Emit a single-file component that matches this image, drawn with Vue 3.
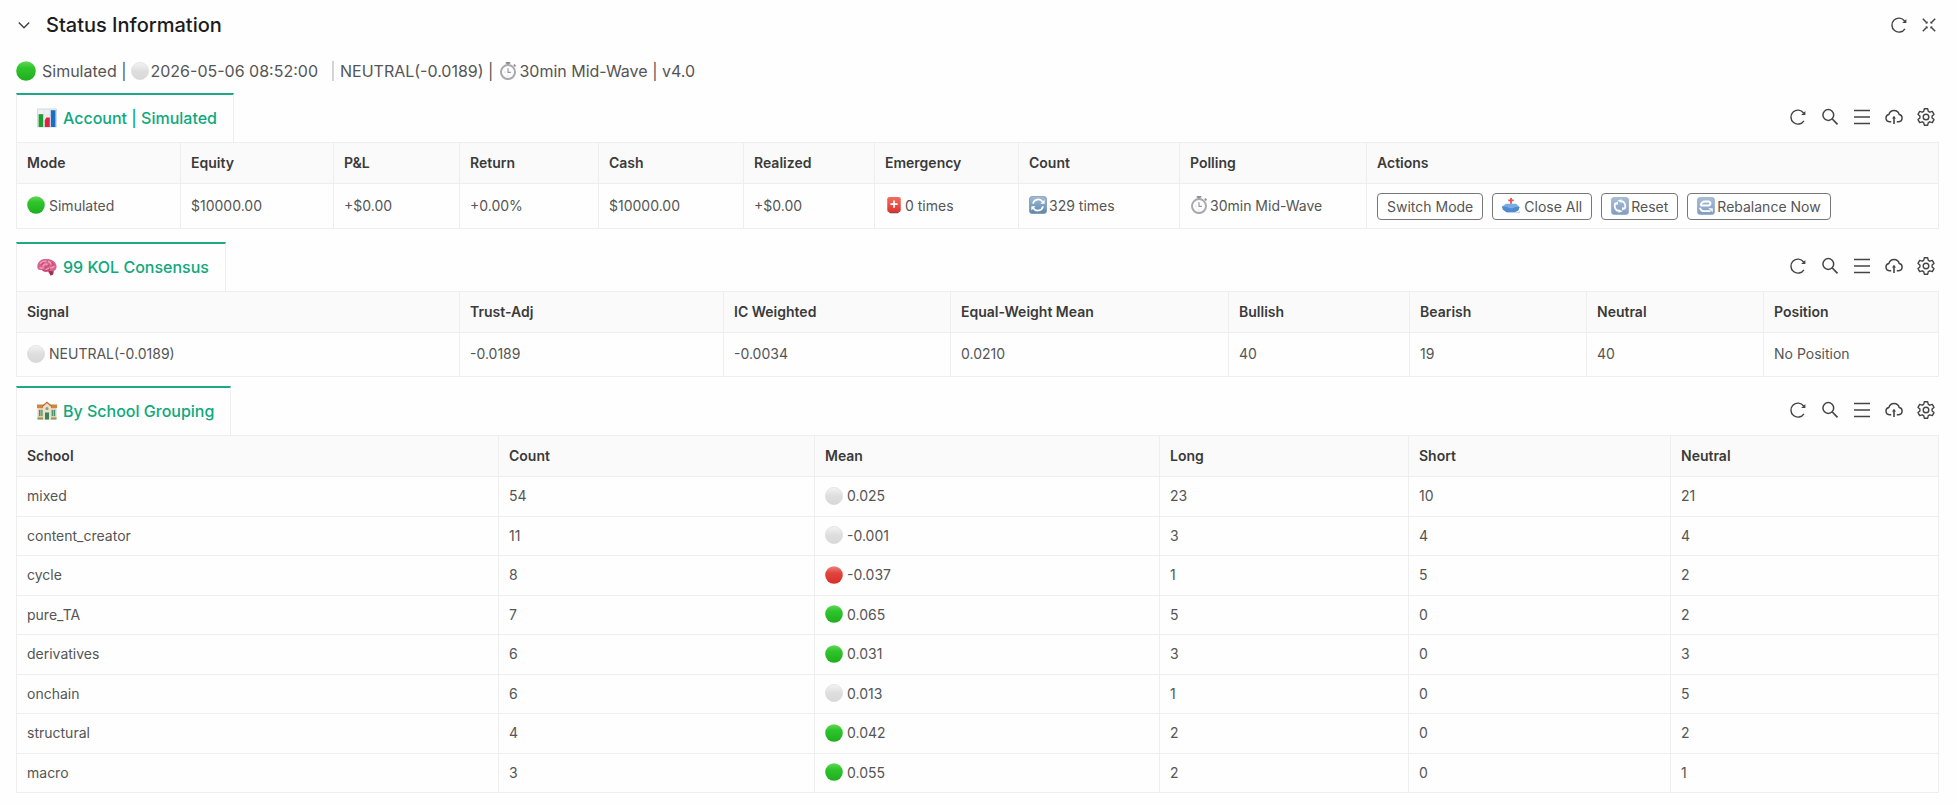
<script setup>
import { ref, computed } from 'vue'

const open = ref(true)

const tools = [
  { icon: 'refresh', label: 'Refresh' },
  { icon: 'search', label: 'Search' },
  { icon: 'menu', label: 'Columns' },
  { icon: 'cloud', label: 'Download' },
  { icon: 'gear', label: 'Settings' }
]

const actions = [
  { text: 'Switch Mode' },
  { text: 'Close All', icon: 'outbox' },
  { text: 'Reset', icon: 'reset', tight: true },
  { text: 'Rebalance Now', icon: 'rebalance', tight: true }
]

const schools = [
  ['mixed', 54, 'white', '0.025', 23, 10, 21],
  ['content_creator', 11, 'white', '-0.001', 3, 4, 4],
  ['cycle', 8, 'red', '-0.037', 1, 5, 2],
  ['pure_TA', 7, 'green', '0.065', 5, 0, 2],
  ['derivatives', 6, 'green', '0.031', 3, 0, 3],
  ['onchain', 6, 'white', '0.013', 1, 0, 5],
  ['structural', 4, 'green', '0.042', 2, 0, 2],
  ['macro', 3, 'green', '0.055', 2, 0, 1]
]

// columns: [title, relative width]
const tables = [
  {
    id: 'account',
    icon: 'chart',
    title: 'Account | Simulated',
    columns: [
      ['Mode', 164], ['Equity', 153], ['P&L', 126], ['Return', 139], ['Cash', 145],
      ['Realized', 131], ['Emergency', 144], ['Count', 161], ['Polling', 187], ['Actions', 572]
    ],
    rows: [[
      { icon: 'green', text: 'Simulated' },
      { text: '$10000.00' },
      { text: '+$0.00' },
      { text: '+0.00%' },
      { text: '$10000.00' },
      { text: '+$0.00' },
      { icon: 'siren', text: '0 times', tight: true },
      { icon: 'cycle', text: '329 times', tight: true },
      { icon: 'watch', text: '30min Mid-Wave', tight: true },
      { actions }
    ]]
  },
  {
    id: 'kol',
    icon: 'brain',
    title: '99 KOL Consensus',
    columns: [
      ['Signal', 443], ['Trust-Adj', 264], ['IC Weighted', 227], ['Equal-Weight Mean', 278],
      ['Bullish', 181], ['Bearish', 177], ['Neutral', 177], ['Position', 175]
    ],
    rows: [[
      { icon: 'white', text: 'NEUTRAL(-0.0189)' },
      { text: '-0.0189' },
      { text: '-0.0034' },
      { text: '0.0210' },
      { text: '40' },
      { text: '19' },
      { text: '40' },
      { text: 'No Position' }
    ]]
  },
  {
    id: 'school',
    icon: 'school',
    title: 'By School Grouping',
    columns: [
      ['School', 482], ['Count', 316], ['Mean', 345], ['Long', 249], ['Short', 262], ['Neutral', 268]
    ],
    rows: schools.map(([name, count, icon, mean, long, short, neutral]) => [
      { text: name }, { text: count }, { icon, text: mean }, { text: long }, { text: short }, { text: neutral }
    ])
  }
]

const sections = computed(() => tables.map(t => {
  const total = t.columns.reduce((sum, c) => sum + c[1], 0)
  return { ...t, columns: t.columns.map(([title, w]) => ({ title, width: (w / total * 100) + '%' })) }
}))
</script>

<template>
  <svg class="sprite" aria-hidden="true">
    <defs>
      <linearGradient id="g-green" x1="0" y1="0" x2="0" y2="1">
        <stop offset="0" stop-color="#5fd957" /><stop offset=".35" stop-color="#2fc42b" /><stop offset="1" stop-color="#1fae1e" />
      </linearGradient>
      <linearGradient id="g-white" x1="0" y1="0" x2="0" y2="1">
        <stop offset="0" stop-color="#f4f4f4" /><stop offset=".5" stop-color="#dedede" /><stop offset="1" stop-color="#d8d8d8" />
      </linearGradient>
      <linearGradient id="g-red" x1="0" y1="0" x2="0" y2="1">
        <stop offset="0" stop-color="#f0807a" /><stop offset=".4" stop-color="#e0443e" /><stop offset="1" stop-color="#d92f2b" />
      </linearGradient>
      <linearGradient id="g-blue" x1="0" y1="0" x2="0" y2="1">
        <stop offset="0" stop-color="#a3bbd5" /><stop offset="1" stop-color="#5f86ad" />
      </linearGradient>
      <linearGradient id="g-pale" x1="0" y1="0" x2="0" y2="1">
        <stop offset="0" stop-color="#a9bdd6" /><stop offset="1" stop-color="#7f9dc0" />
      </linearGradient>
      <linearGradient id="g-siren" x1="0" y1="0" x2="0" y2="1">
        <stop offset="0" stop-color="#f26d60" /><stop offset="1" stop-color="#dd3630" />
      </linearGradient>
    </defs>

    <symbol id="i-chevron" viewBox="0 0 16 16">
      <path d="M2.8 5.5 8 10.7l5.2-5.2" fill="none" stroke="currentColor" stroke-width="1.5" />
    </symbol>
    <symbol id="i-refresh" viewBox="0 0 20 20">
      <path d="M15.9 13.8A7 7 0 1 1 15.6 6" fill="none" stroke="currentColor" stroke-width="1.4" />
      <path d="M17.4 4v4h-4.200z" fill="currentColor" />
    </symbol>
    <symbol id="i-shrink" viewBox="0 0 20 20">
      <path d="M3.800 3.800l4.200 4.200M16.200 3.800l-4.200 4.200M3.800 16.200l4.200-4.200M16.200 16.200l-4.200-4.200" fill="none" stroke="currentColor" stroke-width="1.5" />
      <path d="M8.600 6.300v2.300H6.300zM11.400 6.300v2.300h2.300zM8.600 13.700v-2.300H6.300zM11.400 13.700v-2.300h2.300z" fill="currentColor" />
    </symbol>
    <symbol id="i-search" viewBox="0 0 20 20">
      <circle cx="8.300" cy="8" r="5.400" fill="none" stroke="currentColor" stroke-width="1.5" />
      <path d="M12.300 12l5.200 5.300" fill="none" stroke="currentColor" stroke-width="1.7" />
    </symbol>
    <symbol id="i-menu" viewBox="0 0 20 20">
      <path d="M2 3.500h16M2 10h16M2 16.500h16" fill="none" stroke="currentColor" stroke-width="1.5" />
    </symbol>
    <symbol id="i-cloud" viewBox="0 0 20 20">
      <path d="M7.200 14.800H5.300A3.700 3.700 0 0 1 4.900 7.500a5.300 5.300 0 0 1 10.300 0 3.700 3.700 0 0 1-.4 7.300h-2" fill="none" stroke="currentColor" stroke-width="1.4" />
      <path d="M10 9.500v7.500" fill="none" stroke="currentColor" stroke-width="1.6" />
      <path d="M7.900 11.600 10 9.200l2.100 2.400z" fill="currentColor" />
    </symbol>
    <symbol id="i-gear" viewBox="0 0 20 20">
      <path d="M8.300 1.800h3.400l.6 2.500 1.500.9 2.500-.8 1.700 3-1.900 1.700v1.800l1.900 1.700-1.700 3-2.500-.8-1.500.9-.6 2.500H8.300l-.6-2.500-1.500-.9-2.500.8-1.700-3 1.900-1.700V9.100L2 7.400l1.700-3 2.500.8 1.500-.9z" fill="none" stroke="currentColor" stroke-width="1.4" stroke-linejoin="round" />
      <circle cx="10" cy="10" r="2.800" fill="none" stroke="currentColor" stroke-width="1.4" />
    </symbol>

    <symbol id="i-green" viewBox="0 0 20 20"><circle cx="10" cy="10" r="9.800" fill="url(#g-green)" /></symbol>
    <symbol id="i-white" viewBox="0 0 20 20"><circle cx="10" cy="10" r="9.600" fill="url(#g-white)" stroke="#d2d2d2" stroke-width=".5" /></symbol>
    <symbol id="i-red" viewBox="0 0 20 20"><circle cx="10" cy="10" r="9.800" fill="url(#g-red)" /></symbol>
    <symbol id="i-watch" viewBox="0 0 20 20">
      <path d="M7.500 1h5M10 1v3M16.500 3l1.800 1.800" stroke="#8f8c94" stroke-width="2" fill="none" />
      <circle cx="10" cy="11.200" r="7.800" fill="#fcfcfc" stroke="#aaa7ae" stroke-width="2.200" />
      <path d="M10 7v4.500h3.200" fill="none" stroke="#99969e" stroke-width="1.300" />
      <path d="M6 11.200h1M9.800 15v1" stroke="#c0bec4" stroke-width="1" />
    </symbol>
    <symbol id="i-chart" viewBox="0 0 20 20">
      <path d="M.5 1h19v18H.5z" fill="#eef1f4" stroke="#c3ccd4" stroke-width=".7" />
      <path d="M.5 7h19M.5 13h19M7 1v18M13 1v18" stroke="#d5dbe0" stroke-width=".5" />
      <path d="M1.600 6.200h4.600V19H1.600z" fill="#1f9d33" />
      <path d="M7.800 19v-6.500l1.400-3h3.600V19z" fill="#e0223f" />
      <path d="M13.800 2.200h4.700V19h-4.700z" fill="#1b6dc1" />
    </symbol>
    <symbol id="i-brain" viewBox="0 0 20 20">
      <path d="M.4 10.500C-.2 6.300 3 2.600 7.500 2.100c5.700-.8 11.200 1.600 12 6.600.4 2.700-.9 4.500-2.900 5.200l-.5 3.700-2.500.8-2.600-3.700c-2.800 1-4.800.1-6-1.700C2.700 13.400.7 12.700.4 10.500z" fill="#d9628c" />
      <path d="M3 6.500c2-2 4-2.800 6.500-2.300M6 9.500c.5-2.200 2.500-3 4.500-2.200M11 4.500c2 .2 3 1.500 2.700 3.200M13 10.500c1.500.8 3.300.2 4.200-1.500M2.500 10.500c1.700 1 3.300.5 4.200.4M8.500 12.500c1.500.2 2.500-.5 3-1.700" fill="none" stroke="#f2a5bd" stroke-width="1.300" />
      <path d="M4 8c1.300-.5 2-1.500 2.200-2.700M8 10.700c2-.2 3.600-1.500 4.200-3M14.700 5.200c1.200 1 1.700 2.200 1.200 3.400M5.300 13c2.700.7 5.200.7 7.700-.6" fill="none" stroke="#b03e68" stroke-width=".9" />
      <path d="M11.500 13.500c2 .8 3.700.8 5.100.4l-.5 3.700-2.500.8z" fill="#9c2f50" />
    </symbol>
    <symbol id="i-school" viewBox="0 0 20 20">
      <path d="M.5 6h19v12.500H.5z" fill="#e3cfb0" />
      <path d="M0 3.500h20V7H0z" fill="#cf8444" />
      <path d="M6 18.500V5l4-3.500L14 5v13.500z" fill="#f0dfc3" />
      <path d="M5.300 5.500 10 1.300l4.700 4.200" fill="none" stroke="#b96d35" stroke-width="1.200" />
      <path d="M2 9h1.500v6H2zM4.300 9h1.200v6H4.300zM14.700 9h1.200v6h-1.200zM16.600 9h1.500v6h-1.500z" fill="#3f9277" />
      <path d="M8 11.500h4v7H8z" fill="#39825f" />
      <circle cx="10" cy="7.500" r="1.500" fill="#7f9f98" />
      <path d="M.5 16.500H6v2H.5zM14 16.500h5.500v2H14z" fill="#8c9a5b" />
    </symbol>
    <symbol id="i-siren" viewBox="0 0 20 20">
      <path d="M4 17h12l-1.500 2.200h-9z" fill="#8b3f42" />
      <rect x="2.500" y="1" width="15" height="17" rx="2.500" fill="url(#g-siren)" />
      <path d="M10 5v8M6 9h8" stroke="#fff" stroke-width="2" />
    </symbol>
    <symbol id="i-cycle" viewBox="0 0 20 20">
      <rect x=".5" y=".5" width="19" height="19" rx="3" fill="url(#g-blue)" stroke="#6788a9" stroke-width=".7" />
      <path d="M4.400 8.500a6 6 0 0 1 10.800-2M15.600 11.500a6 6 0 0 1-10.800 2" fill="none" stroke="#fff" stroke-width="2" />
      <path d="M12.700 8.600h4.700V4zM7.300 11.400H2.600V16z" fill="#fff" />
    </symbol>
    <symbol id="i-reset" viewBox="0 0 20 20">
      <rect x=".5" y=".5" width="19" height="19" rx="3" fill="url(#g-pale)" stroke="#8ba3c0" stroke-width=".7" />
      <path d="M8.400 15.700A6 6 0 0 1 5.200 6.400M11.600 4.300a6 6 0 0 1 3.200 9.300" fill="none" stroke="#fff" stroke-width="2" />
      <path d="M7.200 3.800l4.600-1.300v4.300zM12.800 16.200l-4.600 1.300v-4.300zM3.300 7.700l4.300.8.300-3.800zM16.700 12.300l-4.300-.8-.3 3.800z" fill="#fff" />
    </symbol>
    <symbol id="i-rebalance" viewBox="0 0 20 20">
      <rect x=".5" y=".5" width="19" height="19" rx="3" fill="url(#g-pale)" stroke="#8ba3c0" stroke-width=".7" />
      <path d="M4 9.500a5 4.500 0 0 1 5-4.500h3.500a3 2.300 0 0 1 0 4.500H4M3.500 12a4.500 3.700 0 0 0 4.500 3.700h7" fill="none" stroke="#fff" stroke-width="2.200" />
      <path d="M12.500 12.600h5V17z" fill="#fff" />
    </symbol>
    <symbol id="i-outbox" viewBox="0 0 20 20">
      <path d="M0 10.500 4.500 7.500h11l4 3.500-1.500 4-4 2H5l-4-3z" fill="#76abe4" />
      <path d="M0 10.500 5.500 11l2.500 1.500h4.500L15 11h4.500l-1.500 4-4 2H5l-4-3z" fill="#5089cf" />
      <path d="M12 17.500 20 16v1.500h-8z" fill="#b9c6d4" />
      <path d="M10 1v6.500M7 3.800h6" stroke="#e5544f" stroke-width="2" />
    </symbol>
  </svg>

  <main class="panel">
    <header class="panel-head">
      <button class="tool chevron" :aria-expanded="open" aria-label="Toggle" @click="open = !open">
        <svg><use href="#i-chevron" /></svg>
      </button>
      <h1>Status Information</h1>
      <button class="tool" aria-label="Refresh"><svg><use href="#i-refresh" /></svg></button>
      <button class="tool" aria-label="Shrink"><svg><use href="#i-shrink" /></svg></button>
    </header>

    <div v-show="open">
      <p class="status">
        <svg class="emoji"><use href="#i-green" /></svg>
        <span class="mode">Simulated |</span>
        <svg class="emoji"><use href="#i-white" /></svg>
        <span class="time">2026-05-06 08:52:00</span>
        <span class="signal">NEUTRAL(-0.0189) |</span>
        <svg class="emoji"><use href="#i-watch" /></svg>
        <span>30min Mid-Wave | v4.0</span>
      </p>

      <section v-for="s in sections" :key="s.id" :class="s.id">
        <div class="bar">
          <h2 class="tab">
            <svg class="emoji"><use :href="'#i-' + s.icon" /></svg>
            {{ s.title }}
          </h2>
          <div class="tools">
            <button v-for="t in tools" :key="t.icon" class="tool" :aria-label="t.label">
              <svg><use :href="'#i-' + t.icon" /></svg>
            </button>
          </div>
        </div>
        <table>
          <thead>
            <tr>
              <th v-for="c in s.columns" :key="c.title" :style="{ width: c.width }">{{ c.title }}</th>
            </tr>
          </thead>
          <tbody>
            <tr v-for="(row, i) in s.rows" :key="i">
              <td v-for="(cell, j) in row" :key="j">
                <div v-if="cell.actions" class="actions">
                  <button v-for="a in cell.actions" :key="a.text" class="btn" :class="{ tight: a.tight }">
                    <svg v-if="a.icon" class="emoji"><use :href="'#i-' + a.icon" /></svg>{{ a.text }}
                  </button>
                </div>
                <div v-else class="cell" :class="{ tight: cell.tight }">
                  <svg v-if="cell.icon" class="emoji"><use :href="'#i-' + cell.icon" /></svg>
                  {{ cell.text }}
                </div>
              </td>
            </tr>
          </tbody>
        </table>
      </section>
    </div>
  </main>
</template>

<style>
body {
  margin: 0;
  background: #fefefe;
}
</style>

<style scoped>
* {
  box-sizing: border-box;
}
.sprite {
  position: absolute;
  width: 0;
  height: 0;
}
.panel {
  padding: 0 18px 12px 16px;
  font-family: Inter, 'Liberation Sans', sans-serif;
  font-size: 14px;
  color: #555;
}
.panel-head {
  display: flex;
  align-items: center;
  gap: 10px;
  height: 50px;
}
h1 {
  flex: 1;
  margin: 0;
  font-size: 20px;
  font-weight: 500;
  color: #1c1c1c;
}
.tool {
  display: flex;
  width: 20px;
  height: 20px;
  padding: 0;
  border: none;
  background: none;
  color: #444;
  cursor: pointer;
}
.tool svg {
  width: 20px;
  height: 20px;
}
.chevron svg {
  width: 16px;
}
.emoji {
  flex: none;
  width: 18px;
  height: 18px;
}
.status {
  display: flex;
  align-items: center;
  gap: 2px;
  height: 43px;
  margin: 0;
  padding-bottom: 2px;
  font-size: 16px;
  white-space: nowrap;
}
.status .emoji:first-child {
  width: 20px;
  height: 20px;
}
.mode {
  margin: 0 2px 0 4px;
}
.signal {
  margin: 0 4px 0 12px;
  padding-left: 6px;
  border-left: 2px solid #d4d4d4;
}
.bar {
  display: flex;
  justify-content: space-between;
}
.tab {
  display: flex;
  align-items: center;
  gap: 6px;
  height: 49px;
  margin: 0;
  padding: 0 16px 2px 20px;
  border: 1px solid #eee;
  border-top: 2px solid #1fa885;
  border-bottom: none;
  font-size: 16px;
  font-weight: 500;
  color: #0fa87c;
}
.tab .emoji {
  width: 20px;
  height: 20px;
}
.tools {
  display: flex;
  align-items: center;
  gap: 12px;
  padding: 0 3px 2px 0;
}
table {
  width: 100%;
  table-layout: fixed;
  border-collapse: separate;
  border-spacing: 0;
  border-top: 1px solid #eee;
  border-left: 1px solid #eee;
}
th,
td {
  padding: 0 10px;
  border-right: 1px solid #eee;
  border-bottom: 1px solid #eee;
  text-align: left;
  white-space: nowrap;
}
th {
  height: 41px;
  padding-bottom: 2px;
  background: #fafafa;
  font-weight: 600;
  color: #3a3a3a;
}
.account td {
  height: 45px;
}
.kol td {
  height: 44px;
}
.school td {
  height: 39px;
}
.school tr:nth-child(odd) td {
  height: 40px;
}
.account {
  margin-bottom: 13px;
}
.kol {
  margin-bottom: 9px;
}
.cell {
  display: flex;
  align-items: center;
  gap: 4px;
  padding-bottom: 2px;
}
.actions {
  display: flex;
  gap: 9px;
}
.btn {
  display: flex;
  align-items: center;
  gap: 4px;
  height: 27px;
  padding: 0 9px;
  border: 1px solid #777;
  border-radius: 4px;
  background: #fff;
  font: inherit;
  color: inherit;
  cursor: pointer;
}
.tight {
  gap: 2px;
}
.btn:hover {
  background: #f5f5f5;
}
</style>
